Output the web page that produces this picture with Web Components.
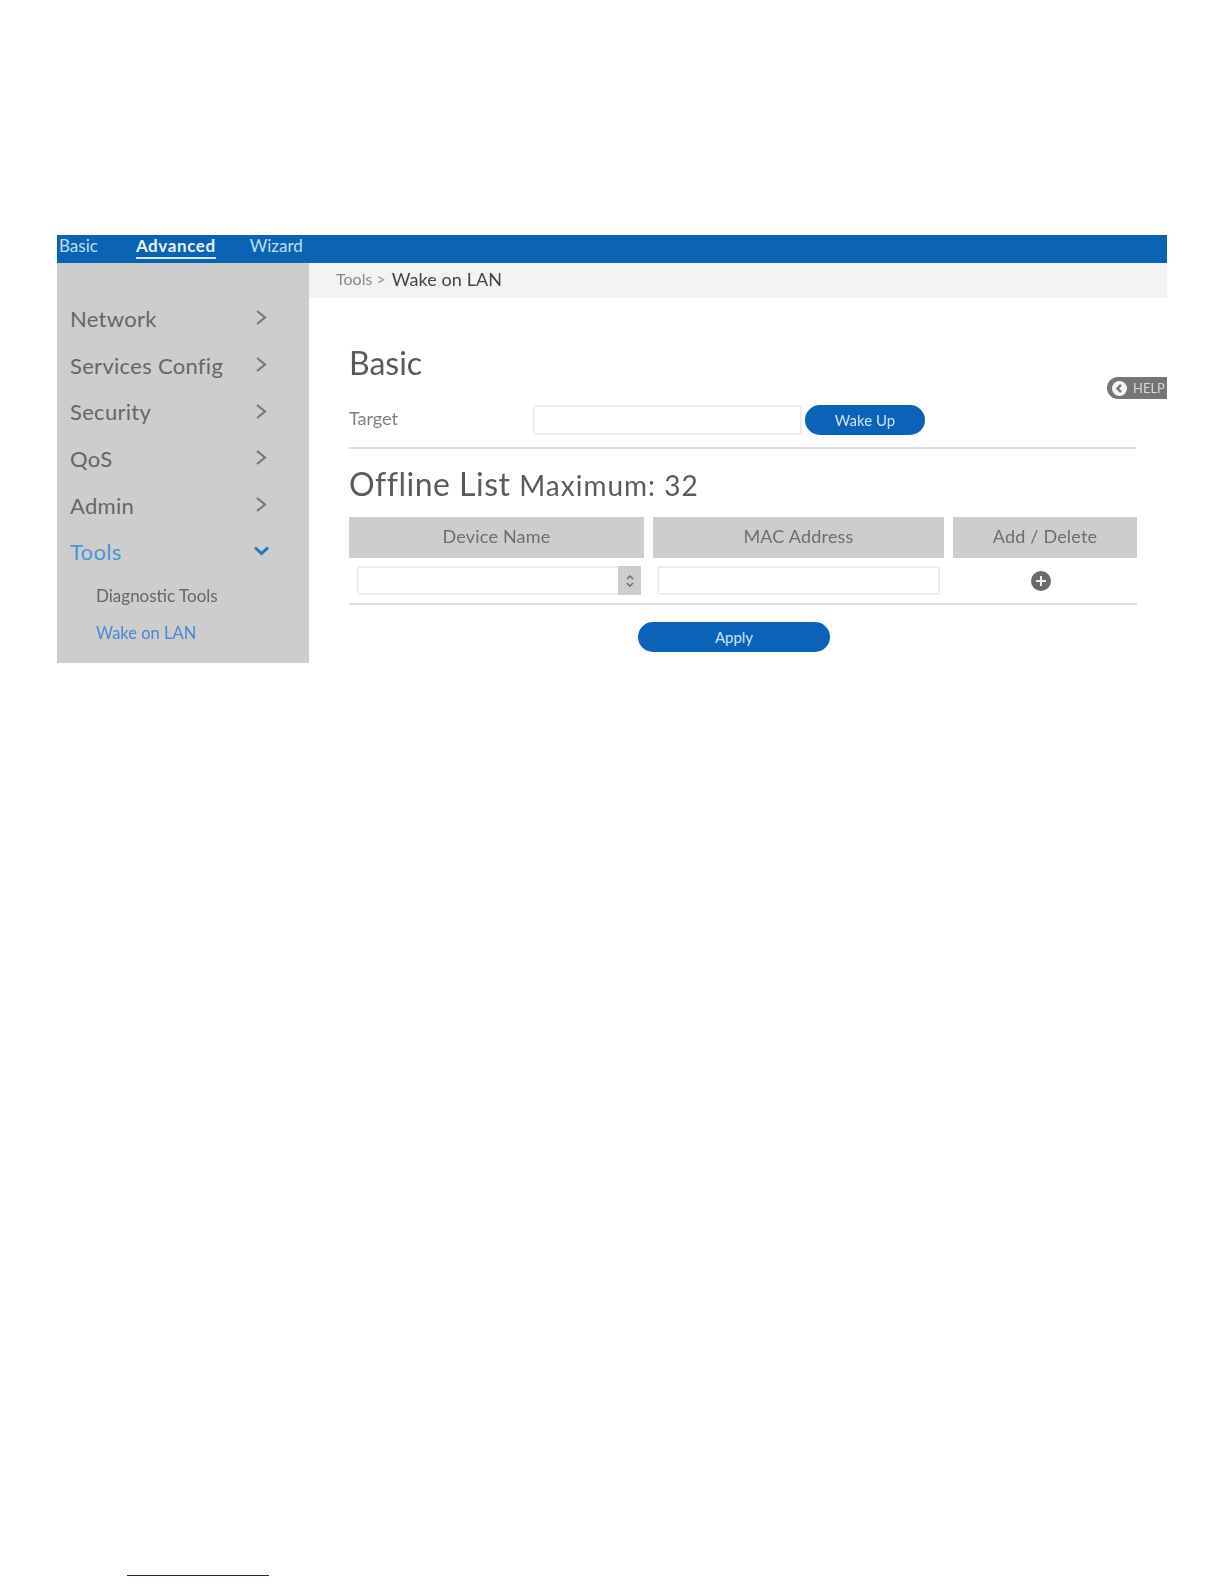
<!DOCTYPE html>
<html>
<head>
<meta charset="utf-8">
<title>Wake on LAN</title>
<style>
html, body { margin: 0; background: #fff; }
body { height: 1584px; overflow: hidden; font-family: "Lato", "Liberation Sans", sans-serif; }
.page { padding: 235px 57px 0; box-sizing: border-box; height: 1575px; filter: blur(0.7px); }
.footer-rule { display: block; margin-left: 127px; width: 142px; height: 1px; background: #1a1a8c; }
</style>
</head>
<body>

<div class="page">
	<top-tabs>
		<tab-link>Basic</tab-link>
		<tab-link active>Advanced</tab-link>
		<tab-link>Wizard</tab-link>
	</top-tabs>
	<main-frame>
		<side-menu slot="side">
			<menu-item>Network</menu-item>
			<menu-item>Services Config</menu-item>
			<menu-item>Security</menu-item>
			<menu-item>QoS</menu-item>
			<menu-item>Admin</menu-item>
			<menu-item open>Tools</menu-item>
			<sub-item first>Diagnostic Tools</sub-item>
			<sub-item active>Wake on LAN</sub-item>
		</side-menu>
		<crumb-bar slot="crumb" parent="Tools &gt;" current="Wake on LAN"></crumb-bar>
		<wol-panel slot="content"></wol-panel>
	</main-frame>
</div>
<div class="footer-rule"></div>

<template id="wol-panel-tpl">
	<style>
	:host { display: block; position: relative; height: 365px; padding: 45px 0 0 40px; box-sizing: border-box; color: #4a4a4a; }
	h2 { margin: 0; font: 400 32px/40px "Lato", sans-serif; font-variant-ligatures: none; color: #5a5a5a; }
	h2.offline { letter-spacing: .5px; }
	h2 small { font-size: 28px; letter-spacing: 1px; }
	.target { display: flex; align-items: center; height: 30px; margin-top: 22px; }
	.target label { width: 184px; margin-bottom: 4px; font-size: 18px; color: #808080; }
	.target text-box { width: 269px; height: 30px; margin-right: 3px; }
	.target pill-button { width: 120px; height: 30px; }
	hr { height: 2px; margin: 0; border: 0; background: #dedede; }
	.target + hr { width: 787px; margin-top: 12px; }
	.offline { margin-top: 15px; }
	.grid { display: grid; grid-template-columns: 295px 291px 184px; column-gap: 9px; width: 788px; margin-top: 12px; }
	.head { height: 41px; box-sizing: border-box; padding-bottom: 3px; display: flex; align-items: center; justify-content: center; background: #cdcdcd; font-size: 18px; letter-spacing: .2px; color: #6e6e6e; }
	.cell { height: 45px; display: flex; align-items: center; }
	.cell.name { padding: 0 3px 0 8px; }
	.cell.mac { padding: 0 4px; }
	.cell.add { justify-content: center; }
	.cell.add svg { width: 20px; height: 20px; margin-right: 9px; }
	.cell text-box { flex: 1; height: 29px; }
	.apply { display: flex; margin: 17px 0 0 289px; width: 192px; height: 30px; }
	.apply pill-button { width: 100%; }
	help-tab { position: absolute; right: 0; top: 79px; }
	</style>
	<h2>Basic</h2>
	<div class="target">
		<label>Target</label>
		<text-box></text-box>
		<pill-button>Wake Up</pill-button>
	</div>
	<hr>
	<h2 class="offline">Offline List <small>Maximum: 32</small></h2>
	<div class="grid">
		<div class="head">Device Name</div>
		<div class="head">MAC Address</div>
		<div class="head">Add / Delete</div>
		<div class="cell name"><text-box spinner></text-box></div>
		<div class="cell mac"><text-box></text-box></div>
		<div class="cell add">
			<svg viewBox="0 0 20 20"><circle cx="10" cy="10" r="10" fill="#6a6a6a"/><path d="M10 5v10M5 10h10" stroke="#eee" stroke-width="2"/></svg>
		</div>
	</div>
	<hr style="width:788px">
	<div class="apply"><pill-button>Apply</pill-button></div>
	<help-tab></help-tab>
</template>

<script>
	// small helper so each element only has to say what goes in its shadow root
	class ShadowEl extends HTMLElement {
		constructor() {
			super();
			this.attachShadow( { mode: 'open' } ).innerHTML = this.markup();
		}
	}

	class TopTabs extends ShadowEl {
		markup() {
			return `<style>
				:host { display: flex; height: 28px; background: #0a63b4; padding-left: 2px; gap: 35px; align-items: flex-start; }
			</style><slot></slot>`;
		}
	}
	class TabLink extends ShadowEl {
		markup() {
			return `<style>
				:host { display: block; font-size: 17px; line-height: 21px; padding-bottom: 1px; color: #c4dcf2; border-bottom: 2px solid transparent; }
				:host([active]) { margin: 0 -1px 0 3px; color: #e8f2fb; font-weight: 700; border-bottom-color: #d5e6f6; letter-spacing: .6px; }
			</style><slot></slot>`;
		}
	}

	class MainFrame extends ShadowEl {
		markup() {
			return `<style>
				:host { display: grid; grid-template-columns: 252px 1fr; grid-template-rows: 35px 365px; }
				.side { grid-row: 1 / 3; background: #cdcdcd; }
			</style>
			<div class="side"><slot name="side"></slot></div>
			<slot name="crumb"></slot>
			<slot name="content"></slot>`;
		}
	}

	class SideMenu extends ShadowEl {
		markup() {
			return `<style>
				:host { display: block; padding-top: 32px; }
			</style><slot></slot>`;
		}
	}
	class MenuItem extends ShadowEl {
		markup() {
			const path = this.hasAttribute( 'open' ) ? 'M1 3.5l6.5 6 6.5-6' : 'M3 1l8 6.5-8 6.5';
			return `<style>
				:host { display: flex; justify-content: space-between; align-items: center; height: 46.7px; padding: 0 40px 0 13px; font-size: 22px; letter-spacing: .3px; color: #666; }
				:host([open]) { color: #4a94d8; }
				svg { width: 15px; height: 15px; margin-top: -1px; }
				path { fill: none; stroke: #777; stroke-width: 2.2; }
				:host([open]) path { stroke: #1f78c1; stroke-width: 3; }
			</style><slot></slot><svg viewBox="0 0 15 15"><path d="${path}"/></svg>`;
		}
	}
	class SubItem extends ShadowEl {
		markup() {
			return `<style>
				:host { display: block; height: 36px; line-height: 36px; padding-left: 39px; font-size: 17px; color: #666; }
				:host([first]) { margin-top: 3px; }
				:host([active]) { margin-top: 1px; color: #4a86d4; font-size: 16.5px; }
			</style><slot></slot>`;
		}
	}

	class CrumbBar extends ShadowEl {
		markup() {
			return `<style>
				:host { display: flex; align-items: center; gap: 6px; background: #f3f3f3; padding: 0 0 4px 27px; }
				.p { font-size: 16px; color: #8a8a8a; }
				.c { font-size: 18px; letter-spacing: .1px; color: #444; }
			</style><span class="p">${this.getAttribute( 'parent' )}</span><span class="c">${this.getAttribute( 'current' )}</span>`;
		}
	}

	class TextBox extends ShadowEl {
		markup() {
			const spin = this.hasAttribute( 'spinner' )
				? `<span class="spin"><svg viewBox="0 0 8 16" width="8" height="16"><path d="M1 6l3-3 3 3M1 10l3 3 3-3" fill="none" stroke="#666" stroke-width="1.4"/></svg></span>`
				: '';
			return `<style>
				:host { display: flex; justify-content: flex-end; box-sizing: border-box; background: #fff; border: 2px solid #ececec; border-radius: 2px; }
				.spin { display: flex; align-items: center; justify-content: center; width: 23px; margin: -2px -2px -2px 0; background: #cdcdcd; }
			</style>${spin}`;
		}
	}

	class PillButton extends ShadowEl {
		markup() {
			return `<style>
				:host { display: flex; align-items: center; justify-content: center; box-sizing: border-box; height: 30px; border-radius: 15px; background: #0a63b8; color: #cfe2f5; font-size: 15px; }
			</style><slot></slot>`;
		}
	}

	class HelpTab extends ShadowEl {
		markup() {
			return `<style>
				:host { display: flex; align-items: center; gap: 6px; width: 60px; height: 22px; box-sizing: border-box; padding-left: 5px; background: #757575; border-radius: 11px 0 0 11px; color: #d8d8d8; font-size: 13px; }
				svg { width: 15px; height: 15px; flex: none; }
			</style><svg viewBox="0 0 15 15"><circle cx="7.5" cy="7.5" r="7.5" fill="#f4f4f4"/><path d="M9 3.8L5.4 7.5 9 11.2" fill="none" stroke="#757575" stroke-width="2.4"/></svg><span>HELP</span>`;
		}
	}

	class WolPanel extends HTMLElement {
		constructor() {
			super();
			const shadowRoot = this.attachShadow( { mode: 'open' } );
			shadowRoot.appendChild( document.getElementById( 'wol-panel-tpl' ).content.cloneNode( true ) );
		}
	}

	customElements.define( 'top-tabs', TopTabs );
	customElements.define( 'tab-link', TabLink );
	customElements.define( 'main-frame', MainFrame );
	customElements.define( 'side-menu', SideMenu );
	customElements.define( 'menu-item', MenuItem );
	customElements.define( 'sub-item', SubItem );
	customElements.define( 'crumb-bar', CrumbBar );
	customElements.define( 'text-box', TextBox );
	customElements.define( 'pill-button', PillButton );
	customElements.define( 'help-tab', HelpTab );
	customElements.define( 'wol-panel', WolPanel );
</script>
</body>
</html>
